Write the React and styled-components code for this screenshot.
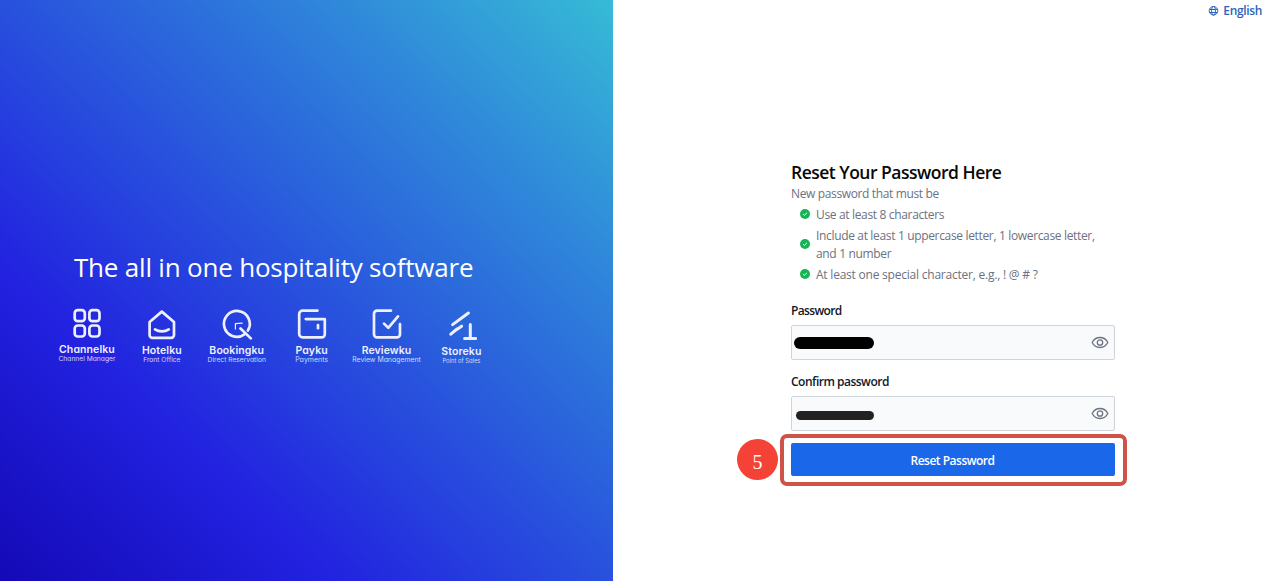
import styled, { createGlobalStyle } from 'styled-components'

const GlobalStyle = createGlobalStyle`
  *, *::before, *::after {
    box-sizing: border-box;
  }

  body {
    margin: 0;
    background: #fff;
    font-family: 'Open Sans', 'Noto Sans', sans-serif;
  }
`

const Page = styled.main`
  display: grid;
  grid-template-columns: 613px 1fr;
  height: 581px;
  overflow: hidden;
`

const Hero = styled.section`
  padding: 249px 0 0 49.5px;
  color: #fff;
  background: linear-gradient(to top right, #1409b6 0%, #2222e0 27%, #2f86da 76%, #36bbd6 100%);
`

const Tagline = styled.h1`
  margin: 0 0 23px 24.5px;
  font-size: 26px;
  line-height: 36px;
  font-weight: 400;
  letter-spacing: -0.2px;
  white-space: nowrap;
`

const Products = styled.ul`
  display: grid;
  grid-template-columns: repeat(6, 74.9px);
  margin: 0;
  padding: 0;
  list-style: none;
`

const Product = styled.li`
  display: flex;
  flex-direction: column;
  align-items: center;
  font-family: Inter, sans-serif;
  font-feature-settings: 'cv11';
  white-space: nowrap;
`

const ProductIcon = styled.svg`
  width: 32px;
  height: 32px;
  fill: none;
  stroke: #eef0ff;
  stroke-width: 2.7;
  stroke-linecap: round;
  stroke-linejoin: round;
`

const ProductName = styled.span`
  margin-top: ${({ $drop }) => 3 + $drop}px;
  font-size: 10.5px;
  line-height: 12px;
  font-weight: 600;
  letter-spacing: 0.1px;
  color: #eef0ff;
`

const ProductNote = styled.span`
  margin-top: -1px;
  font-size: ${({ $size }) => $size || 6.7}px;
  line-height: 8px;
  color: #d3d8fb;
`

const Panel = styled.section`
  display: flex;
  flex-direction: column;
`

const LanguageButton = styled.button`
  display: flex;
  align-items: center;
  align-self: flex-end;
  gap: 4px;
  height: 22px;
  margin-right: 13px;
  padding: 0;
  border: 0;
  background: none;
  color: #2b66bd;
  font: 600 12px/22px 'Open Sans', sans-serif;
  letter-spacing: -0.35px;
`

const Form = styled.form`
  display: flex;
  flex-direction: column;
  width: 324px;
  margin: 138px 0 0 178px;
`

const Title = styled.h2`
  margin: 0 0 1px;
  font-size: 17.5px;
  line-height: 24px;
  font-weight: 600;
  letter-spacing: -0.5px;
  color: #080808;
`

const Hint = styled.p`
  margin: 0;
  font-size: 12px;
  line-height: 18px;
  letter-spacing: -0.36px;
  color: #6b7280;
`

const Rules = styled.ul`
  display: flex;
  flex-direction: column;
  gap: 3px;
  margin: 3px 0 0;
  padding: 0 0 0 9px;
  list-style: none;
`

const Rule = styled.li`
  display: flex;
  align-items: center;
  gap: 6px;
  font-size: 12px;
  line-height: 18px;
  letter-spacing: ${({ $tracking }) => $tracking || -0.34}px;
  color: #6b7280;
  white-space: pre-line;

  svg {
    margin-top: -2px;
  }
`

const Label = styled.label`
  margin-top: ${({ $top }) => $top}px;
  font-size: 12px;
  line-height: 18px;
  font-weight: 600;
  letter-spacing: ${({ $tracking }) => $tracking}px;
  color: #111827;
`

const Field = styled.div`
  display: flex;
  align-items: center;
  justify-content: space-between;
  height: 35px;
  margin-top: 5px;
  padding: 0 5px 0 ${({ $inset }) => $inset}px;
  border: 1px solid #cfd3da;
  border-radius: 2px;
  background: #f9fafb;
`

const Mask = styled.span`
  width: ${({ $width }) => $width}px;
  height: ${({ $height }) => $height}px;
  margin-top: ${({ $top }) => $top}px;
  border-radius: 6px;
  background: ${({ $color }) => $color};
`

const SubmitArea = styled.div`
  position: relative;
  margin-top: 12px;
`

const SubmitButton = styled.button`
  display: block;
  width: 100%;
  height: 33px;
  padding: 2px 1px 0 0;
  border: 0;
  border-radius: 2px;
  background: #1b67ea;
  color: #fff;
  font: 600 12px/18px 'Open Sans', sans-serif;
  letter-spacing: -0.5px;
`

const Highlight = styled.div`
  position: absolute;
  inset: -9px -12px -10px -11px;
  border: 4px solid #cf5248;
  border-radius: 7px;
`

const StepBadge = styled.div`
  position: absolute;
  top: -4px;
  left: -54px;
  width: 41px;
  height: 41px;
  padding-top: 4px;
  border-radius: 50%;
  background: #f44336;
  color: #fff;
  font: 20px/38px 'Liberation Serif', serif;
  text-align: center;
`

const products = [
  {
    name: 'Channelku',
    note: 'Channel Manager',
    drop: 0.5,
    icon: (
      <>
        <rect x="3.7" y="2.2" width="10.1" height="11" rx="3" />
        <rect x="18.4" y="2.2" width="10.1" height="11" rx="3" />
        <rect x="3.7" y="17.5" width="10.1" height="11" rx="3" />
        <rect x="18.4" y="17.5" width="10.1" height="11" rx="3" />
      </>
    ),
  },
  {
    name: 'Hotelku',
    note: 'Front Office',
    drop: 2,
    icon: (
      <>
        <path d="M3.6 14 15.8 3.6 28 14v13a2.8 2.8 0 0 1-2.8 2.8H6.4A2.8 2.8 0 0 1 3.6 27Z" />
        <path d="M9 21.4c3.8 2.6 10 2.6 13.8 0" />
      </>
    ),
  },
  {
    name: 'Bookingku',
    note: 'Direct Reservation',
    drop: 1.5,
    icon: (
      <>
        <path d="M23.4 26.3a12.9 12.9 0 1 1 3.5-3.8" />
        <path d="m19.5 20.5 10.3 9.9" />
        <path d="M14.4 21v-5.3l6.8-.5" strokeWidth="1.2" />
      </>
    ),
  },
  {
    name: 'Payku',
    note: 'Payments',
    drop: 2,
    noteSize: 7,
    icon: (
      <>
        <path d="M21.5 2.6H6.6a3.4 3.4 0 0 0-3.4 3.4v20a3.4 3.4 0 0 0 3.4 3.4h19a3.2 3.2 0 0 0 3.2-3.2V11.1H9.8" />
        <path d="M22 17v3.2" />
      </>
    ),
  },
  {
    name: 'Reviewku',
    note: 'Review Management',
    drop: 2,
    noteSize: 6.9,
    icon: (
      <>
        <path d="M20 2.6H6.2A3.2 3.2 0 0 0 3 5.8v20.4a3.2 3.2 0 0 0 3.2 3.2h19.6a3.2 3.2 0 0 0 3.2-3.2V16" />
        <path d="m13 15.6 4.3 4.2L27 8.4" />
      </>
    ),
  },
  {
    name: 'Storeku',
    note: 'Point of Sales',
    drop: 3,
    noteSize: 5.8,
    icon: (
      <>
        <path d="M7.6 16.6 23.4 5" strokeWidth="3" />
        <path d="m5.8 26.2 6.2-5.2M11.8 21.4l4.8-3.2" strokeWidth="3" />
        <path d="M25.3 16.6v14M19.6 30.5h11" strokeWidth="3" />
      </>
    ),
  },
]

const GlobeIcon = () => (
  <svg width="11" height="11" viewBox="0 0 11 11" fill="none" stroke="currentColor">
    <circle cx="5.5" cy="4.8" r="4.3" />
    <ellipse cx="5.5" cy="4.8" rx="2" ry="4.3" />
    <path d="M1.5 3.5h8M1.5 6.5h8" />
  </svg>
)

const CheckIcon = () => (
  <svg width="10" height="10" viewBox="0 0 10 10">
    <circle cx="5" cy="5" r="5" fill="#16b455" />
    <path d="m3 5.1 1.4 1.3L7 3.8" fill="none" stroke="#fff" />
  </svg>
)

const EyeIcon = () => (
  <svg width="18" height="13" viewBox="0 0 18 13" fill="none" stroke="#6b7280" strokeWidth="1.3">
    <path d="M1.2 6.5C2.8 3.3 5.6 1.5 9 1.5s6.2 1.8 7.8 5c-1.6 3.2-4.4 5-7.8 5s-6.2-1.8-7.8-5Z" />
    <circle cx="9" cy="6.5" r="2.7" />
  </svg>
)

function App() {
  return (
    <Page>
      <GlobalStyle />
      <Hero>
        <Tagline>The all in one hospitality software</Tagline>
        <Products>
          {products.map(({ name, note, drop, noteSize, icon }) => (
            <Product key={name}>
              <ProductIcon viewBox="0 0 32 32">{icon}</ProductIcon>
              <ProductName $drop={drop}>{name}</ProductName>
              <ProductNote $size={noteSize}>{note}</ProductNote>
            </Product>
          ))}
        </Products>
      </Hero>

      <Panel>
        <LanguageButton type="button">
          <GlobeIcon />
          English
        </LanguageButton>

        <Form>
          <Title>Reset Your Password Here</Title>
          <Hint>New password that must be</Hint>
          <Rules>
            <Rule>
              <CheckIcon />
              <span>Use at least 8 characters</span>
            </Rule>
            <Rule>
              <CheckIcon />
              <span>{'Include at least 1 uppercase letter, 1 lowercase letter,\nand 1 number'}</span>
            </Rule>
            <Rule $tracking={-0.22}>
              <CheckIcon />
              <span>At least one special character, e.g., ! @ # ?</span>
            </Rule>
          </Rules>

          <Label $top={18} $tracking={-0.65}>Password</Label>
          <Field $inset={2}>
            <Mask $width={80} $height={12} $top={0} $color="#000" />
            <EyeIcon />
          </Field>

          <Label $top={13} $tracking={-0.5}>Confirm password</Label>
          <Field $inset={4}>
            <Mask $width={78} $height={9} $top={4} $color="#222" />
            <EyeIcon />
          </Field>

          <SubmitArea>
            <Highlight />
            <SubmitButton type="button">Reset Password</SubmitButton>
            <StepBadge>5</StepBadge>
          </SubmitArea>
        </Form>
      </Panel>
    </Page>
  )
}

export default App
